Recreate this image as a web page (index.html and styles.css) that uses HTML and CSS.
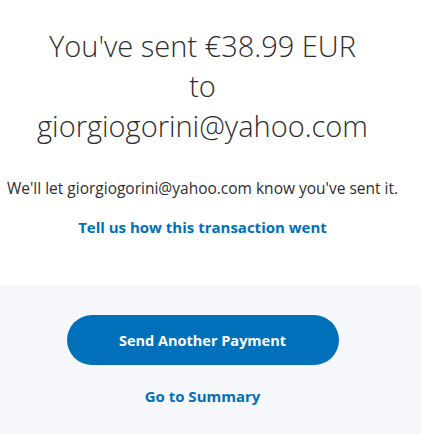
FILE: index.html
```html
<!DOCTYPE html>
<html>
<head>
<meta charset="utf-8">
<link rel="stylesheet" href="styles.css">
</head>
<body>
<main class="page">
  <section class="top">
    <h1 class="title">You've sent €38.99 EUR<br>to<br>giorgiogorini@yahoo.com</h1>
    <p class="note">We'll let giorgiogorini@yahoo.com know you've sent it.</p>
    <a class="link feedback" href="#">Tell us how this transaction went</a>
  </section>
  <section class="actions">
    <button class="primary">Send Another Payment</button>
    <a class="link summary" href="#">Go to Summary</a>
  </section>
</main>
</body>
</html>
```

FILE: styles.css
```css
html, body {
  margin: 0;
  padding: 0;
  background: #ffffff;
}
body {
  font-family: "Open Sans", "Liberation Sans", sans-serif;
  color: #2c2e2f;
  width: 421px;
  height: 434px;
  overflow: hidden;
}
.page {
  display: flex;
  flex-direction: column;
  height: 434px;
}
.top {
  display: flex;
  flex-direction: column;
  align-items: center;
  padding: 26px 16px 0 0;
  height: 285px;
  box-sizing: border-box;
}
.title {
  margin: 0;
  font-weight: 300;
  font-size: 29px;
  line-height: 40px;
  text-align: center;
  color: #2c2e2f;
}
.note {
  margin: 32px 0 0 0;
  font-size: 15.5px;
  line-height: 20px;
  text-align: center;
  white-space: nowrap;
}
.link {
  color: #0070ba;
  font-weight: 700;
  text-decoration: none;
  font-size: 15px;
  line-height: 20px;
}
.feedback {
  margin-top: 19px;
}
.actions {
  flex: 1;
  background: #f5f7fa;
  display: flex;
  flex-direction: column;
  align-items: center;
  padding: 30px 16px 0 0;
}
.primary {
  width: 272px;
  height: 50px;
  border: none;
  border-radius: 25px;
  background: #0070ba;
  color: #ffffff;
  font-family: inherit;
  font-weight: 700;
  font-size: 14.5px;
}
.summary {
  margin-top: 21px;
}
```
